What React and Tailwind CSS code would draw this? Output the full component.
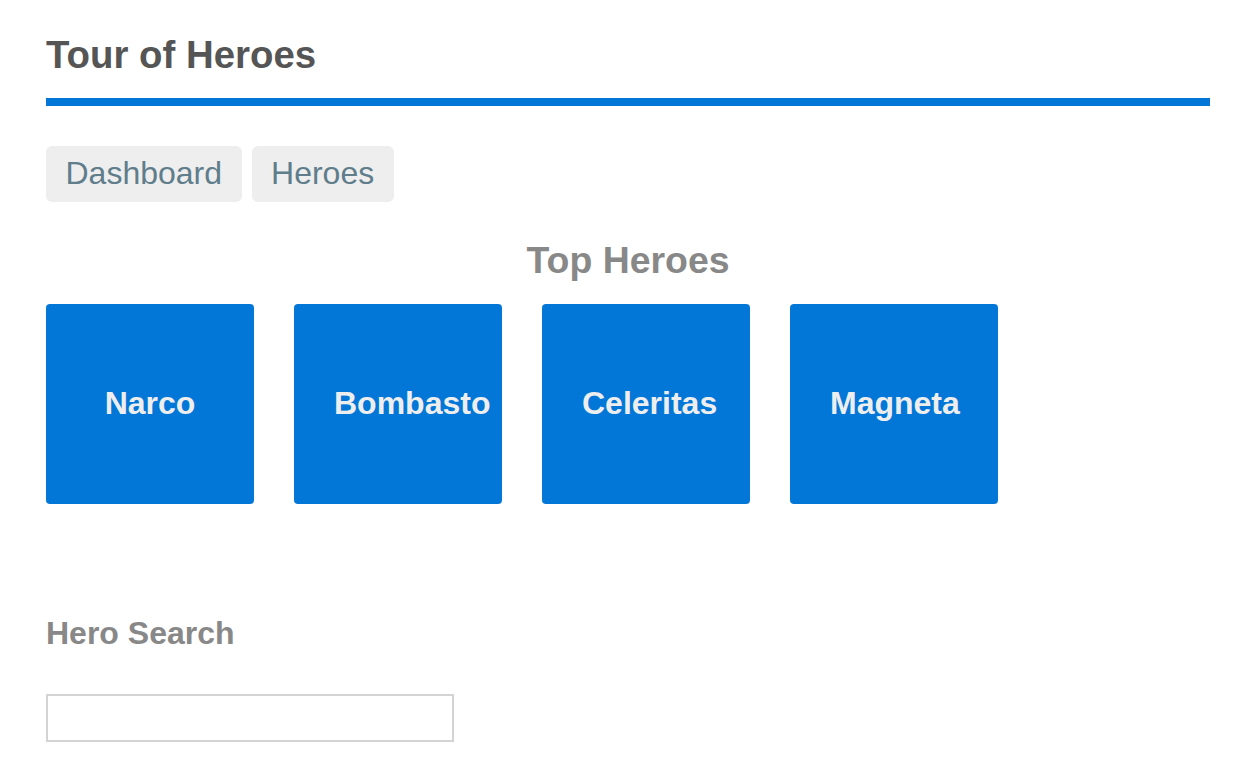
const heroes = ["Narco", "Bombasto", "Celeritas", "Magneta"];

export default function App() {
  return (
    <div className="min-h-[780px] bg-white font-['Liberation_Sans',Arial,sans-serif]">
      <div className="ml-[46px] w-[1164px] pt-[35px]">
        {/* Header */}
        <h1 className="h-[40px] text-[38.4px] leading-[40px] font-bold text-[#555]">
          Tour of Heroes
        </h1>
        <div className="mt-[23px] h-[8px] bg-[#0277d7]" />

        {/* Nav */}
        <nav className="mt-[40px] flex gap-[10px]">
          {["Dashboard", "Heroes"].map((label) => (
            <a
              key={label}
              className="h-[56px] rounded-[6px] bg-[#eee] px-[19.5px] pt-[11px] text-[32px] leading-[32px] text-[#607d8b]"
            >
              {label}
            </a>
          ))}
        </nav>

        {/* Dashboard */}
        <h3 className="mt-[38px] h-[40px] text-center text-[37.44px] leading-[40px] font-bold text-[#888]">
          Top Heroes
        </h3>
        <div className="mt-[24px] flex gap-[40px]">
          {heroes.map((name) => (
            <div
              key={name}
              className="h-[200px] w-[208px] rounded-[4px] bg-[#0277d7] px-[40px] pt-[83px]"
            >
              <h4 className="whitespace-nowrap text-center text-[32px] leading-[32px] font-bold text-[#eee]">
                {name}
              </h4>
            </div>
          ))}
        </div>

        {/* Search */}
        <h4 className="mt-[113px] h-[32px] text-[32px] leading-[32px] font-bold text-[#888]">
          Hero Search
        </h4>
        <input
          type="text"
          className="mt-[45px] block h-[48px] w-[408px] border-2 border-[#d3d3d3] outline-none"
        />
      </div>
    </div>
  );
}
